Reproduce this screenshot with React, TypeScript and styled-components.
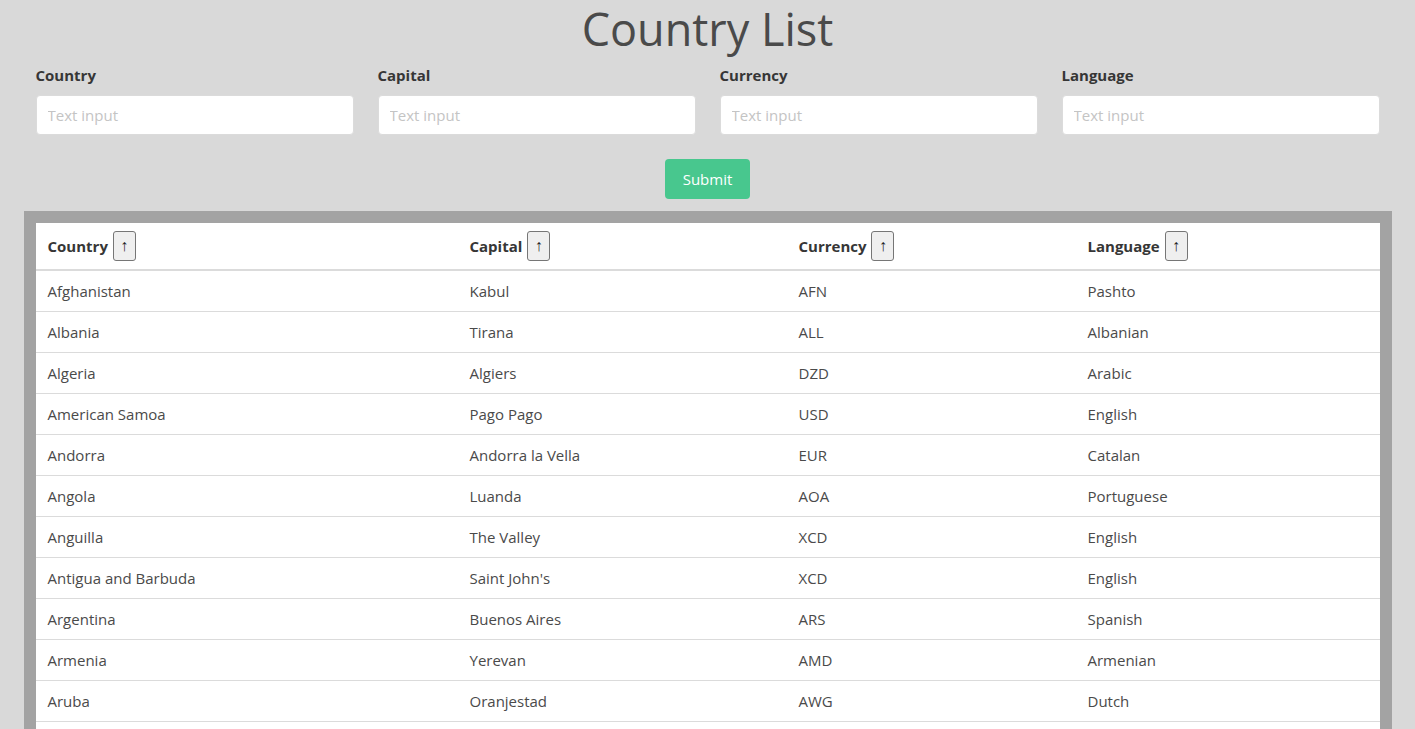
import styled, { createGlobalStyle } from 'styled-components';

type TCountry = {
  name: string;
  capital: string;
  currency: string;
  language: string;
};

const COUNTRIES: TCountry[] = [
  { name: 'Afghanistan', capital: 'Kabul', currency: 'AFN', language: 'Pashto' },
  { name: 'Albania', capital: 'Tirana', currency: 'ALL', language: 'Albanian' },
  { name: 'Algeria', capital: 'Algiers', currency: 'DZD', language: 'Arabic' },
  { name: 'American Samoa', capital: 'Pago Pago', currency: 'USD', language: 'English' },
  { name: 'Andorra', capital: 'Andorra la Vella', currency: 'EUR', language: 'Catalan' },
  { name: 'Angola', capital: 'Luanda', currency: 'AOA', language: 'Portuguese' },
  { name: 'Anguilla', capital: 'The Valley', currency: 'XCD', language: 'English' },
  { name: 'Antigua and Barbuda', capital: "Saint John's", currency: 'XCD', language: 'English' },
  { name: 'Argentina', capital: 'Buenos Aires', currency: 'ARS', language: 'Spanish' },
  { name: 'Armenia', capital: 'Yerevan', currency: 'AMD', language: 'Armenian' },
  { name: 'Aruba', capital: 'Oranjestad', currency: 'AWG', language: 'Dutch' },
  { name: 'Australia', capital: 'Canberra', currency: 'AUD', language: 'English' },
];

const FIELDS = ['Country', 'Capital', 'Currency', 'Language'];
const COLUMN_WIDTHS = [422, 329, 289, 304];

const GlobalStyle = createGlobalStyle`
  html, body {
    margin: 0;
    padding: 0;
    background: #d9d9d9;
    overflow: hidden;
  }

  body {
    font-family: "Open Sans", "Noto Sans", sans-serif;
    font-size: 15px;
    line-height: 1.5;
    color: #4a4a4a;
  }

  * {
    box-sizing: border-box;
  }
`;

const App: React.FC = () => {
  return (
    <>
      <GlobalStyle />
      <Page>
        <Title>Country List</Title>
        <FilterForm onSubmit={(e) => e.preventDefault()}>
          <FieldGrid>
            {FIELDS.map((field) => (
              <Field key={field}>
                <Label>{field}</Label>
                <TextInput type="text" placeholder="Text input" />
              </Field>
            ))}
          </FieldGrid>
          <SubmitButton type="submit">Submit</SubmitButton>
        </FilterForm>
        <TableFrame>
          <Table>
            <thead>
              <tr>
                {FIELDS.map((field, i) => (
                  <HeadCell key={field} $width={COLUMN_WIDTHS[i]}>
                    {field} <SortButton type="button">↑</SortButton>
                  </HeadCell>
                ))}
              </tr>
            </thead>
            <tbody>
              {COUNTRIES.map((country) => (
                <Row key={country.name}>
                  <Cell>{country.name}</Cell>
                  <Cell>{country.capital}</Cell>
                  <Cell>{country.currency}</Cell>
                  <Cell>{country.language}</Cell>
                </Row>
              ))}
            </tbody>
          </Table>
        </TableFrame>
      </Page>
    </>
  );
};

export default App;

const Page = styled.div`
  width: 1368px;
  margin: 0 auto;
`;

const Title = styled.h1`
  margin: 0;
  padding-top: 2px;
  font-size: 45px;
  font-weight: 400;
  line-height: 54px;
  text-align: center;
  color: #4a4a4a;
`;

const FilterForm = styled.form`
  display: flex;
  flex-direction: column;
  align-items: center;
  padding: 7px 12px 12px;
`;

const FieldGrid = styled.div`
  width: 100%;
  display: grid;
  grid-template-columns: repeat(4, 1fr);
  gap: 24px;
`;

const Field = styled.div`
  display: flex;
  flex-direction: column;
`;

const Label = styled.label`
  margin-bottom: 8px;
  font-size: 15px;
  font-weight: 700;
  line-height: 24px;
  color: #363636;
`;

const TextInput = styled.input`
  height: 40px;
  padding: 0 11px;
  border: 1px solid #dbdbdb;
  border-radius: 4px;
  background: #fff;
  font-family: inherit;
  font-size: 15px;
  color: #363636;
  outline: none;

  &::placeholder {
    color: #c4c4c4;
  }
`;

const SubmitButton = styled.button`
  margin-top: 24px;
  width: 85px;
  height: 40px;
  padding: 0;
  border: none;
  border-radius: 4px;
  background: #48c78e;
  font-family: inherit;
  font-size: 15px;
  color: #fff;
  cursor: pointer;
`;

const TableFrame = styled.div`
  padding: 12px;
  background: #a3a3a3;
`;

const Table = styled.table`
  width: 100%;
  border-collapse: collapse;
  background: #fff;
  table-layout: fixed;
`;

const HeadCell = styled.th<{ $width: number }>`
  width: ${({ $width }) => $width}px;
  padding: 8px 12px;
  border-bottom: 2px solid #dbdbdb;
  font-weight: 700;
  text-align: left;
  color: #363636;
  white-space: nowrap;
  line-height: 30px;
`;

const SortButton = styled.button`
  width: 23px;
  height: 30px;
  margin-left: 1px;
  padding: 0;
  border: 1px solid #767676;
  border-radius: 3px;
  background: #efefef;
  font-family: "Liberation Sans", sans-serif;
  font-size: 16px;
  font-weight: 400;
  line-height: 28px;
  color: #222;
  vertical-align: top;
`;

const Row = styled.tr`
  border-bottom: 1px solid #dbdbdb;
`;

const Cell = styled.td`
  height: 41px;
  padding: 8px 12px;
  line-height: 24px;
  color: #4a4a4a;
`;
